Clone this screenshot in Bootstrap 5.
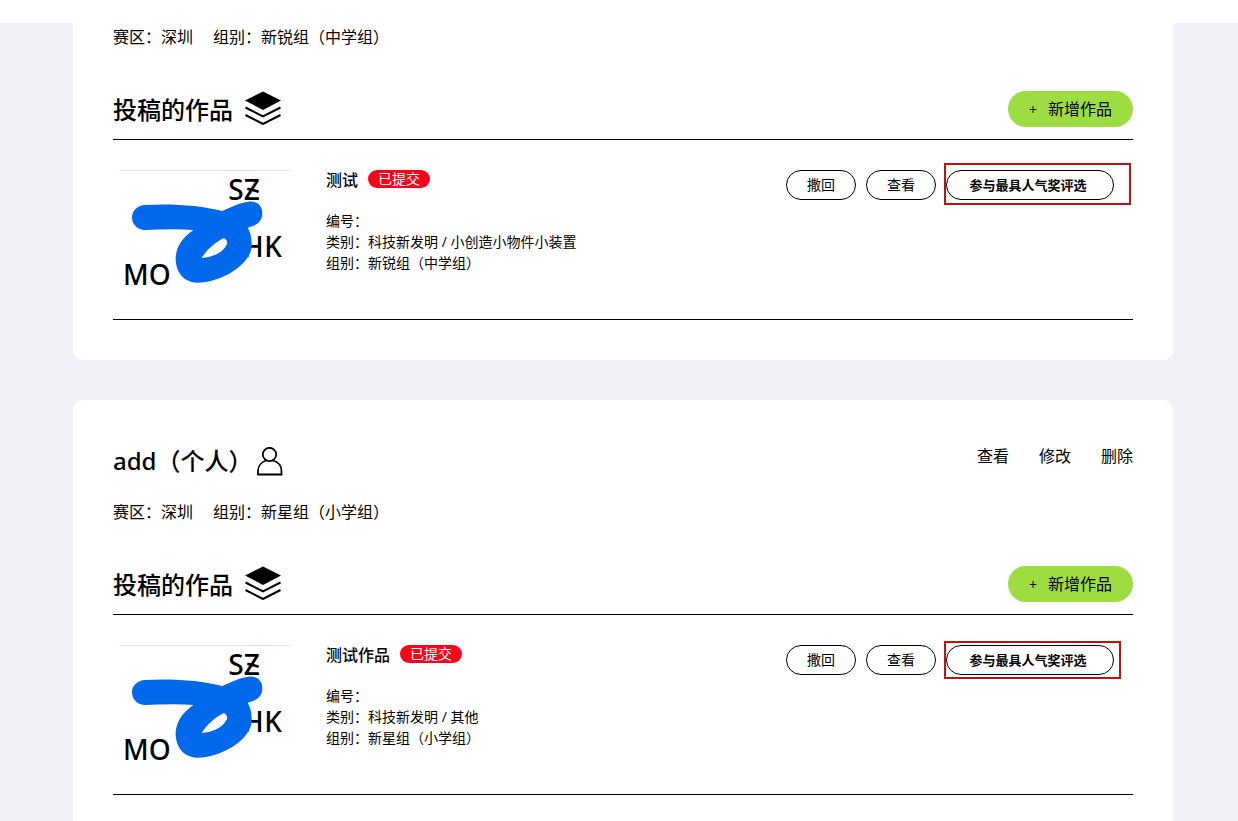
<!DOCTYPE html>
<html lang="zh-CN">
<head>
<meta charset="utf-8">
<meta name="viewport" content="width=device-width, initial-scale=1">
<title>投稿的作品</title>
<link href="https://cdn.jsdelivr.net/npm/bootstrap@5.3.0/dist/css/bootstrap.min.css" rel="stylesheet">
<style>
  body { font-family: "Open Sans", "Noto Sans CJK SC", sans-serif; font-size: 16px; line-height: 24px; color: #000; background: #fff; }
  a { color: #000; text-decoration: none; }
  .top-strip { height: 23px; }
  .page { background: #f1f2f8; padding-left: 8px; min-height: calc(100vh - 23px); }
  .wrap { max-width: 1100px; }
  .panel { background: #fff; border-radius: 10px; padding: 40px; }
  .panel-continued { padding-top: 2px; border-top-left-radius: 0; border-top-right-radius: 0; }
  .panel + .panel { margin-top: 40px; }
  .title { font-family: "Noto Sans", "Noto Sans CJK SC", sans-serif; font-size: 24px; line-height: 38px; font-weight: 500; margin: 0; }
  .entry-head { height: 42px; margin-bottom: 18px; }
  .entry-links { gap: 30px; padding-top: 4px; }
  .facts { gap: 20px; margin-bottom: 42px; }
  .works-head { height: 49px; border-bottom: 1px solid #000; }
  .btn-new { --bs-btn-bg: #9ddd42; --bs-btn-hover-bg: #8fce36; --bs-btn-color: #000; --bs-btn-line-height: 24px; height: 36px; padding: 5px 20px; font-size: 16px; border: 1px solid transparent; }
  .plus { font-size: 14px; margin-right: 11px; }
  .work { gap: 33px; padding: 30px 0 29px; border-bottom: 1px solid #000; }
  .thumb { width: 180px; height: 120px; flex: none; }
  .city { font-family: "Noto Sans", sans-serif; font-size: 84px; font-weight: 500; }
  .work-name { font-size: 16px; line-height: 20px; font-weight: 500; margin: 0; }
  .status { background: #ff0018; font-size: 14px; line-height: 18px; padding: 0 10px; margin-left: 10px; }
  .meta { font-size: 14px; line-height: 21px; margin-top: 20px; }
  .actions { gap: 10px; padding-right: 19px; }
  .btn-line { --bs-btn-border-color: #000; --bs-btn-color: #000; --bs-btn-hover-border-color: #000; --bs-btn-hover-bg: #eee; width: 70px; height: 30px; padding: 0; font-size: 14px; line-height: 28px; }
  .btn-vote { width: 168px; padding-right: 4px; font-size: 13px; font-weight: 700; }
  .hint { position: absolute; pointer-events: none; border: 2px solid #c01010; inset: -4px -7px -4px -2px; }
  .hint-wide { inset: -7px -17px -5px -2px; }
</style>
</head>
<body>
<svg class="d-none">
  <symbol id="layers" viewBox="0 0 36 34">
    <path d="M18 .5 36 9.500 18 19 0 9.500Z"/>
    <path d="M.5 16.500 18 25.500 35.500 16.500M.5 24 18 33 35.500 24" fill="none" stroke="#000" stroke-width="2"/>
  </symbol>
  <symbol id="logo" viewBox="9 30 540 360">
    <path d="M27 31.500H540" stroke="#e6e6e6" stroke-width="3"/>
    <text class="city" x="355" y="119">SZ</text>
    <path d="M412 86 446 95" stroke="#000" stroke-width="8"/>
    <text class="city" x="398 463" y="290">HK</text>
    <text class="city" x="39" y="374">MO</text>
    <path fill="#0068eb" fill-rule="evenodd" d="M103 135C180 130 270 135 337 153 370 138 390 128 415 125 445 122 457 140 457 160 457 185 440 197 413 203 420 215 426 230 425 260 422 310 340 367 262 368 215 366 196 330 197 292 200 260 215 235 250 210 200 206 150 209 103 210 78 208 66 190 66 172 66 153 80 138 103 135ZM275 294C288 272 315 246 342 234 350 238 354 248 350 254 338 278 308 291 275 294Z"/>
  </symbol>
</svg>

<div class="top-strip"></div>
<main class="page">
  <div class="wrap mx-auto">

    <section class="panel panel-continued">
      <div class="facts d-flex"><span>赛区：深圳</span><span>组别：新锐组（中学组）</span></div>
      <div class="works-head d-flex justify-content-between align-items-start">
        <div class="d-flex align-items-start">
          <h2 class="title">投稿的作品</h2>
          <svg class="ms-2 me-1" width="44" height="34" viewBox="-4 0 44 34" aria-hidden="true"><use href="#layers" width="36" height="34"/></svg>
        </div>
        <button type="button" class="btn btn-new rounded-pill"><span class="plus">+</span>新增作品</button>
      </div>
      <article class="work d-flex align-items-start">
        <svg class="thumb" role="img" aria-label="作品封面"><use href="#logo"/></svg>
        <div class="flex-grow-1">
          <div class="d-flex align-items-start">
            <h3 class="work-name">测试</h3>
            <span class="status rounded-pill text-white">已提交</span>
          </div>
          <div class="meta">
            <div>编号：</div>
            <div>类别：科技新发明 / 小创造小物件小装置</div>
            <div>组别：新锐组（中学组）</div>
          </div>
        </div>
        <div class="actions d-flex">
          <button type="button" class="btn btn-line rounded-pill">撒回</button>
          <button type="button" class="btn btn-line rounded-pill">查看</button>
          <div class="position-relative d-flex">
            <button type="button" class="btn btn-line btn-vote rounded-pill">参与最具人气奖评选</button>
            <span class="hint hint-wide"></span>
          </div>
        </div>
      </article>
    </section>

    <section class="panel">
      <div class="entry-head d-flex justify-content-between align-items-start">
        <div class="d-flex align-items-center h-100">
          <h2 class="title">add（个人）</h2>
          <svg class="ms-1" width="26" height="29" viewBox="0 0 26 29" fill="none" stroke="#000" stroke-width="1.800" aria-hidden="true">
            <circle cx="12.500" cy="7.500" r="6.700"/><path d="M9 13.500C4.500 15 1 19 1 24V27.500H24.500V24C24.500 19 21 15 16 13.500"/>
          </svg>
        </div>
        <nav class="entry-links d-flex"><a href="#">查看</a><a href="#">修改</a><a href="#">删除</a></nav>
      </div>
      <div class="facts d-flex"><span>赛区：深圳</span><span>组别：新星组（小学组）</span></div>
      <div class="works-head d-flex justify-content-between align-items-start">
        <div class="d-flex align-items-start">
          <h2 class="title">投稿的作品</h2>
          <svg class="ms-2 me-1" width="44" height="34" viewBox="-4 0 44 34" aria-hidden="true"><use href="#layers" width="36" height="34"/></svg>
        </div>
        <button type="button" class="btn btn-new rounded-pill"><span class="plus">+</span>新增作品</button>
      </div>
      <article class="work d-flex align-items-start">
        <svg class="thumb" role="img" aria-label="作品封面"><use href="#logo"/></svg>
        <div class="flex-grow-1">
          <div class="d-flex align-items-start">
            <h3 class="work-name">测试作品</h3>
            <span class="status rounded-pill text-white">已提交</span>
          </div>
          <div class="meta">
            <div>编号：</div>
            <div>类别：科技新发明 / 其他</div>
            <div>组别：新星组（小学组）</div>
          </div>
        </div>
        <div class="actions d-flex">
          <button type="button" class="btn btn-line rounded-pill">撒回</button>
          <button type="button" class="btn btn-line rounded-pill">查看</button>
          <div class="position-relative d-flex">
            <button type="button" class="btn btn-line btn-vote rounded-pill">参与最具人气奖评选</button>
            <span class="hint"></span>
          </div>
        </div>
      </article>
    </section>

  </div>
</main>
<script src="https://cdn.jsdelivr.net/npm/bootstrap@5.3.0/dist/js/bootstrap.bundle.min.js"></script>
</body>
</html>
